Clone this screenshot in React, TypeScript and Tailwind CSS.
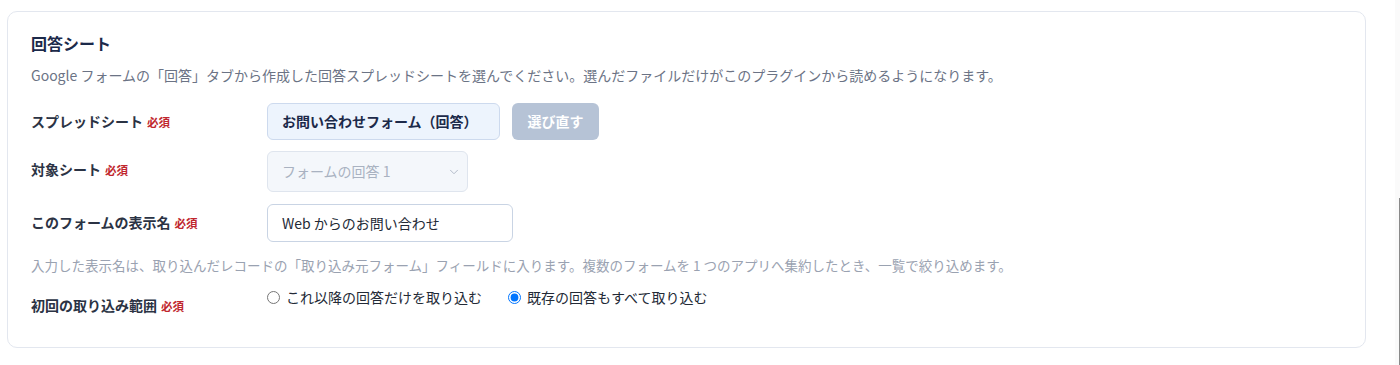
import { ChevronDown } from 'lucide-react';

const font = { fontFamily: '"Noto Sans CJK JP", "Noto Sans", sans-serif' };

function Required() {
  return <span className="ml-1 text-[11.5px] font-bold text-[#c0262d]">必須</span>;
}

function Row({ label, children }: { label: string; children: React.ReactNode }) {
  return (
    <div className="flex items-start">
      <div className="w-[236px] shrink-0 pt-[9px] text-[14px] leading-[18px] font-bold text-[#2b3344]">
        {label}
        <Required />
      </div>
      <div className="flex items-center gap-3">{children}</div>
    </div>
  );
}

export default function App() {
  return (
    <div className="flex min-h-[365px] bg-white" style={font}>
      <div className="flex-1 pl-[7px] pr-[29px] pt-[11px]">
        <div className="h-[337px] rounded-[10px] border border-[#e3e7ef] bg-white pl-[23px] pr-6 pt-[20px]">
          <h2 className="text-[16px] leading-[22px] font-bold text-[#1c2a4a]">回答シート</h2>
          <p className="mt-[11px] text-[14px] leading-[20px] text-[#6b7385]">
            Google フォームの「回答」タブから作成した回答スプレッドシートを選んでください。選んだファイルだけがこのプラグインから読めるようになります。
          </p>

          <div className="mt-[18px] flex flex-col gap-[11px]">
            <Row label="スプレッドシート">
              <div className="flex h-[37px] w-[233px] items-center rounded-md border border-[#cddaee] bg-[#edf4fd] px-[14px] text-[14px] font-bold text-[#1c2a4a]">
                お問い合わせフォーム（回答）
              </div>
              <button className="h-[37px] w-[87px] rounded-md bg-[#b6c3d6] text-[14px] font-bold text-white">
                選び直す
              </button>
            </Row>

            <Row label="対象シート">
              <div className="flex h-[41px] w-[201px] items-center justify-between rounded-md border border-[#dfe5ee] bg-[#f4f7fb] pl-[14px] pr-[6px] text-[14px] text-[#a9b2c1]">
                <span>フォームの回答 1</span>
                <ChevronDown size={14} strokeWidth={1.5} className="text-[#a9b2c1]" />
              </div>
            </Row>

            <div className="mt-px flex flex-col gap-[13px]">
              <Row label="このフォームの表示名">
                <div className="flex h-[38px] w-[246px] items-center rounded-md border border-[#c9d4e4] bg-white px-[14px] text-[14px] text-[#232a36]">
                  Web からのお問い合わせ
                </div>
              </Row>
              <p className="text-[13.5px] leading-[20px] text-[#9aa2b1]">
                入力した表示名は、取り込んだレコードの「取り込み元フォーム」フィールドに入ります。複数のフォームを 1 つのアプリへ集約したとき、一覧で絞り込めます。
              </p>
            </div>
          </div>

          <div className="mt-[12px] flex items-start">
            <div className="w-[236px] shrink-0 pt-[9px] text-[14px] leading-[18px] font-bold text-[#2b3344]">
              初回の取り込み範囲
              <Required />
            </div>
            <div className="flex items-center gap-[26px] text-[14px] leading-[20px] text-[#232a36]">
              <label className="flex items-center gap-[6px]">
                <input type="radio" name="range" className="m-0 h-[13px] w-[13px]" />
                これ以降の回答だけを取り込む
              </label>
              <label className="flex items-center gap-[6px]">
                <input type="radio" name="range" defaultChecked className="m-0 h-[13px] w-[13px]" />
                既存の回答もすべて取り込む
              </label>
            </div>
          </div>
        </div>
      </div>
      <div className="flex w-[5px] flex-col bg-[#fafafa]">
        <div className="h-[198px]" />
        <div className="ml-auto w-px flex-1 bg-[#8a8a8a]" />
      </div>
    </div>
  );
}
